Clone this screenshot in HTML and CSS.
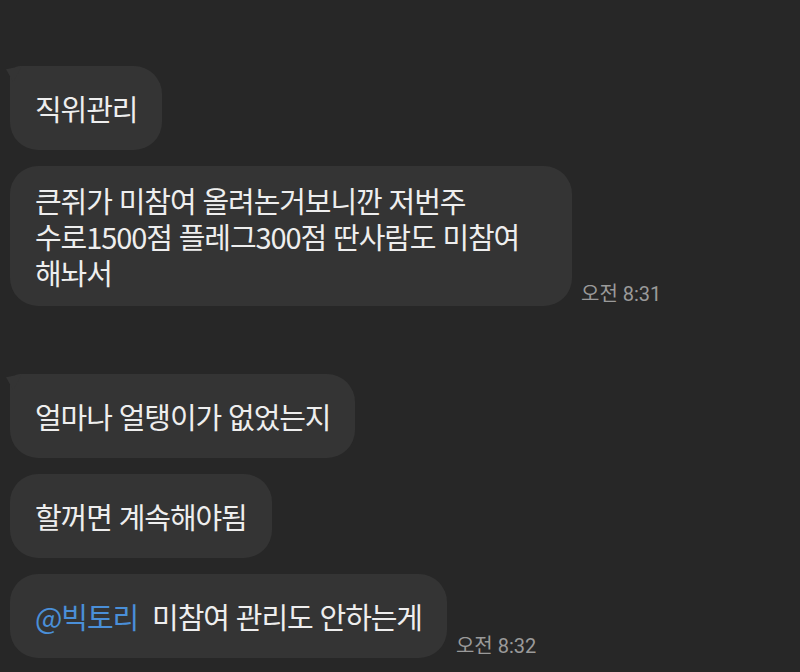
FILE: index.html
```html
<!DOCTYPE html>
<html lang="ko">
<head>
  <meta charset="UTF-8">
  <title>채팅</title>
  <link rel="stylesheet" href="styles.css">
</head>
<body>
  <div class="chat">
    <div class="row">
      <div class="bubble tail"><p class="msg">직위관리</p></div>
    </div>
    <div class="row">
      <div class="bubble wide"><p class="msg">큰쥐가 미참여 올려논거보니깐 저번주<br>수로1500점 플레그300점 딴사람도 미참여<br>해놔서</p></div>
      <span class="time">오전 8:31</span>
    </div>
    <div class="row group">
      <div class="bubble tail"><p class="msg">얼마나 얼탱이가 없었는지</p></div>
    </div>
    <div class="row">
      <div class="bubble"><p class="msg">할꺼면 계속해야됨</p></div>
    </div>
    <div class="row">
      <div class="bubble"><p class="msg"><span class="mention">@빅토리</span>미참여 관리도 안하는게</p></div>
      <span class="time">오전 8:32</span>
    </div>
  </div>
</body>
</html>
```

FILE: styles.css
```css
body, html {
  margin: 0;
  padding: 0;
  height: 100%;
  overflow: hidden;
  background-color: #272727;
  font-family: "Noto Sans CJK KR", "Noto Sans", sans-serif;
  color: #eeeeee;
}
.chat {
  display: flex;
  flex-direction: column;
  gap: 16px;
  padding: 66px 0 0 10px;
}
.row {
  display: flex;
  align-items: flex-end;
  gap: 9px;
}
.row.group {
  margin-top: 52px;
}
.bubble {
  position: relative;
  box-sizing: border-box;
  display: flex;
  align-items: center;
  min-height: 84px;
  padding: 16px 25px;
  background-color: #343434;
  border-radius: 28px;
}
.bubble.tail {
  border-top-left-radius: 10px;
}
.bubble.tail::before {
  content: "";
  position: absolute;
  left: -4px;
  top: 0;
  width: 16px;
  height: 16px;
  background-color: #343434;
  clip-path: polygon(0 20%, 100% 0, 45% 100%);
}
.bubble.wide {
  width: 562px;
}
.msg {
  margin: 0;
  font-size: 29px;
  line-height: 36px;
  letter-spacing: -1.1px;
  white-space: nowrap;
}
.mention {
  color: #4a8fd8;
  margin-right: 14px;
}
.time {
  margin-bottom: 1px;
  font-family: Roboto, "Noto Sans CJK KR", sans-serif;
  font-size: 20px;
  line-height: 22px;
  color: #9a9a9a;
  white-space: nowrap;
}
```
